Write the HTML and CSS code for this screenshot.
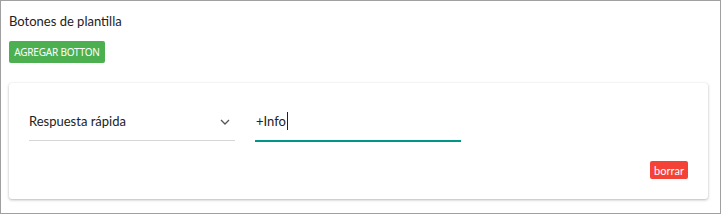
FILE: index.html
```html
<!DOCTYPE html>
<html lang="es">
<head>
<meta charset="utf-8">
<title>Botones de plantilla</title>
<link rel="stylesheet" href="styles.css">
</head>
<body>
<div class="page">
  <div class="title">Botones de plantilla</div>
  <button class="btn btn-add">AGREGAR BOTTON</button>
  <div class="card">
    <div class="fields">
      <div class="select">
        <span class="select-text">Respuesta rápida</span>
        <svg class="chevron" width="10" height="6" viewBox="0 0 10 6"><path d="M1 1 L5 5 L9 1" fill="none" stroke="#555" stroke-width="1.3"/></svg>
      </div>
      <div class="input"><span class="input-text">+Info</span><span class="caret"></span></div>
    </div>
    <div class="actions">
      <button class="btn btn-del">borrar</button>
    </div>
  </div>
</div>
</body>
</html>
```
FILE: styles.css
```css
html, body {
  margin: 0;
  padding: 0;
}
body {
  width: 721px;
  height: 214px;
  box-sizing: border-box;
  border: 1px solid #a0a0a0;
  background: #fff;
  font-family: Lato, "Noto Sans", sans-serif;
  color: #222;
  overflow: hidden;
}
.page {
  padding: 10px 12px 0 8px;
}
.title {
  font-size: 13px;
  line-height: 20px;
  color: #222;
}
.btn {
  border: none;
  color: #fff;
  border-radius: 2px;
  padding: 0;
  cursor: pointer;
  white-space: nowrap;
}
.btn-add {
  display: block;
  margin-top: 10px;
  width: 96px;
  height: 22px;
  background: #4caf50;
  font-family: "Noto Sans", sans-serif;
  font-size: 10px;
  letter-spacing: -0.2px;
}
.card {
  margin-top: 20px;
  height: 116px;
  box-sizing: border-box;
  border-radius: 3px;
  background: #fff;
  box-shadow: 0 1px 3px rgba(0,0,0,0.28), 0 0 1px rgba(0,0,0,0.08);
  padding: 24px 20px 20px 20px;
}
.fields {
  display: flex;
  gap: 20px;
}
.select {
  width: 206px;
  height: 34px;
  box-sizing: border-box;
  border-bottom: 1px solid #d6d6d6;
  display: flex;
  align-items: center;
  justify-content: space-between;
  padding-right: 4px;
  padding-bottom: 5px;
}
.select-text, .input-text {
  font-size: 13px;
  line-height: 18px;
  color: #222;
}
.chevron {
  margin-top: 2px;
  margin-right: 1px;
}
.input {
  width: 206px;
  height: 35px;
  box-sizing: border-box;
  border-bottom: 2px solid #009688;
  display: flex;
  align-items: center;
  padding-left: 1px;
  padding-bottom: 5px;
}
.caret {
  display: inline-block;
  width: 1px;
  height: 18px;
  background: #222;
  margin-left: 1px;
}
.actions {
  display: flex;
  justify-content: flex-end;
  margin-top: 19px;
}
.btn-del {
  width: 38px;
  height: 18px;
  background: #f44336;
  font-family: Lato, "Noto Sans", sans-serif;
  font-size: 11px;
}
```
